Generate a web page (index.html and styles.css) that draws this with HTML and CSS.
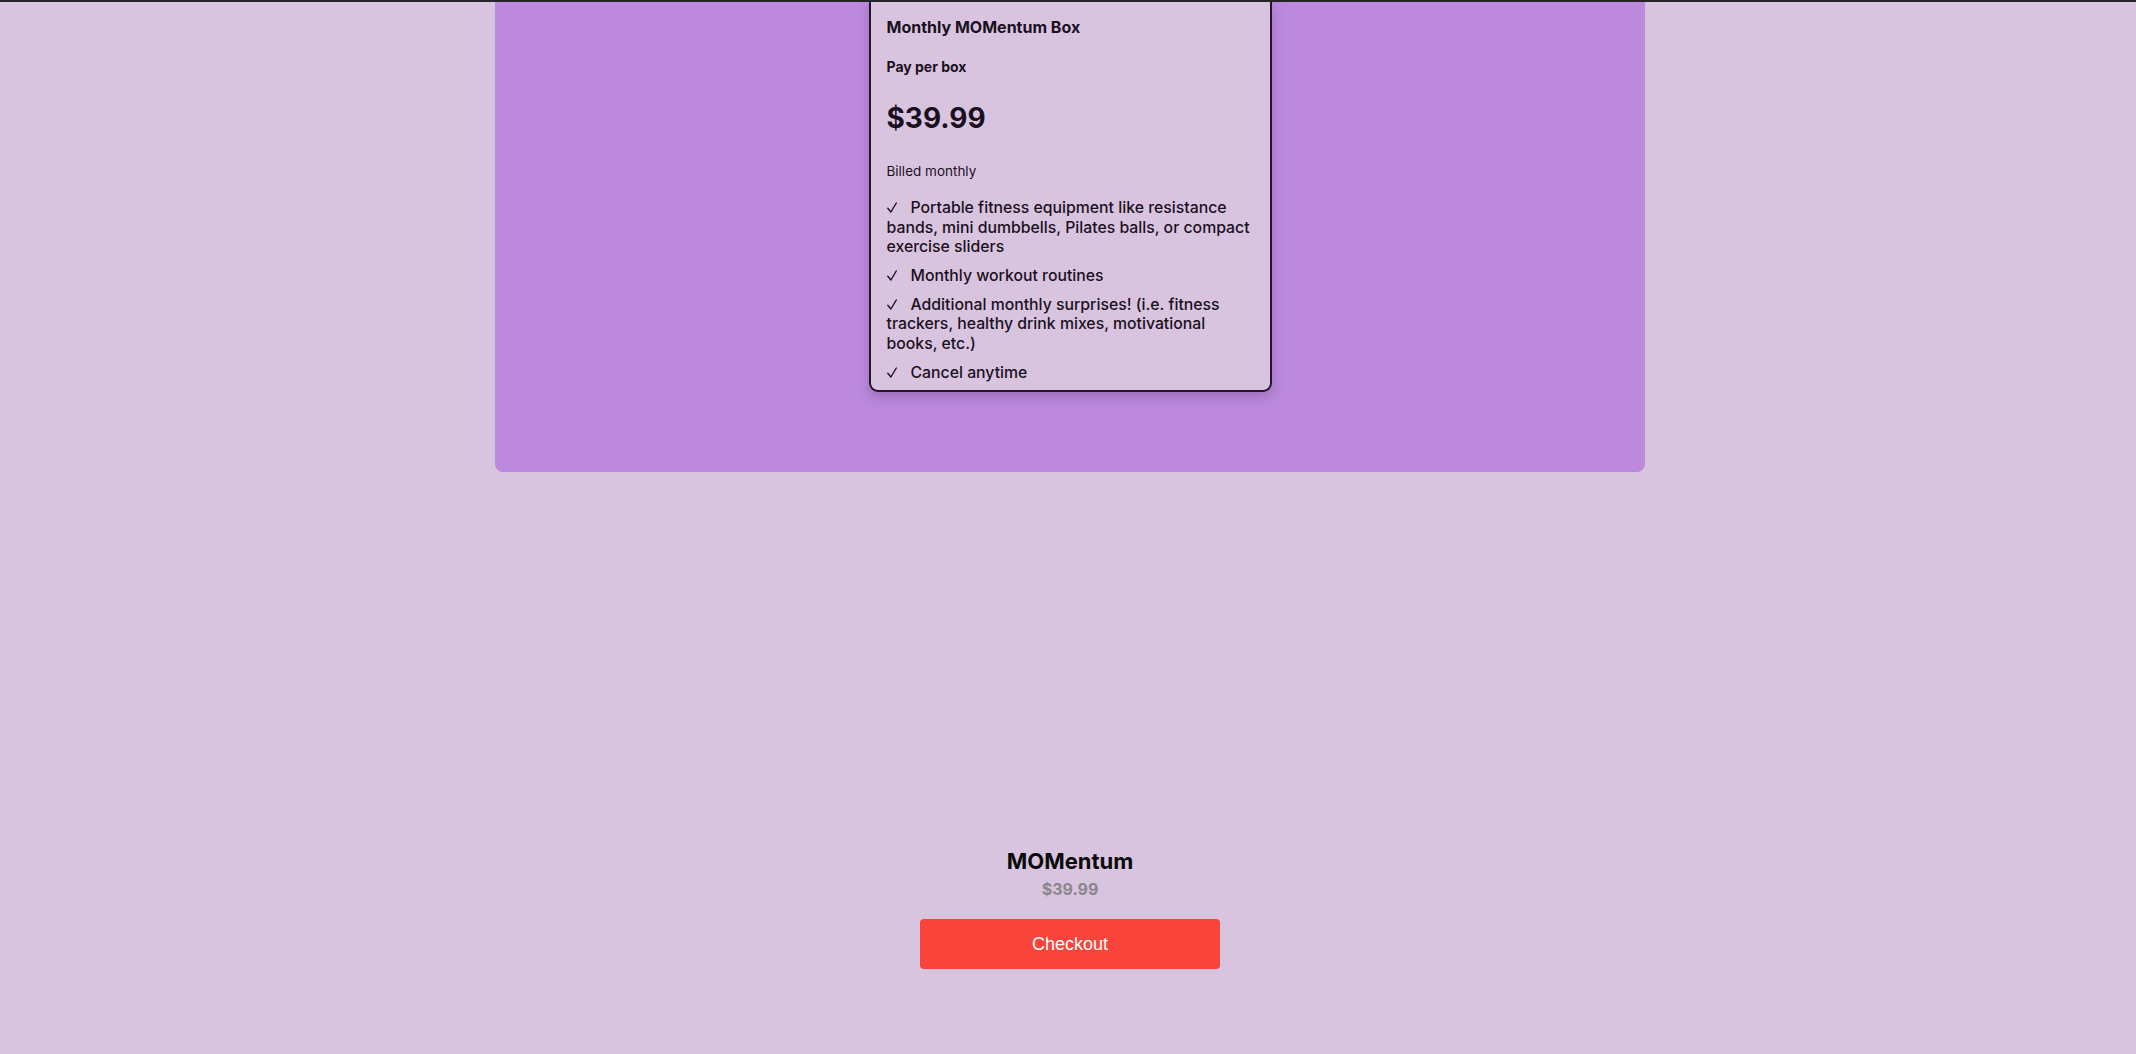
FILE: index.html
```html
<!DOCTYPE html>
<html lang="en">
<head>
<meta charset="utf-8">
<title>MOMentum</title>
<link rel="stylesheet" href="styles.css">
</head>
<body>
<div class="topline"></div>
<main class="page">
  <section class="panel">
    <div class="card">
      <h3 class="card-title">Monthly MOMentum Box</h3>
      <p class="card-sub">Pay per box</p>
      <p class="card-price">$39.99</p>
      <p class="card-billed">Billed monthly</p>
      <ul class="features">
        <li><svg class="check" viewBox="0 0 10 11" width="10" height="11"><path d="M0.8 6.3 L3.9 10 L9.3 1" fill="none" stroke="#1a1120" stroke-width="1.4" stroke-linecap="round" stroke-linejoin="round"/></svg>Portable fitness equipment like resistance<br>bands, mini dumbbells, Pilates balls, or compact<br>exercise sliders</li>
        <li><svg class="check" viewBox="0 0 10 11" width="10" height="11"><path d="M0.8 6.3 L3.9 10 L9.3 1" fill="none" stroke="#1a1120" stroke-width="1.4" stroke-linecap="round" stroke-linejoin="round"/></svg>Monthly workout routines</li>
        <li><svg class="check" viewBox="0 0 10 11" width="10" height="11"><path d="M0.8 6.3 L3.9 10 L9.3 1" fill="none" stroke="#1a1120" stroke-width="1.4" stroke-linecap="round" stroke-linejoin="round"/></svg>Additional monthly surprises! (i.e. fitness<br>trackers, healthy drink mixes, motivational<br>books, etc.)</li>
        <li><svg class="check" viewBox="0 0 10 11" width="10" height="11"><path d="M0.8 6.3 L3.9 10 L9.3 1" fill="none" stroke="#1a1120" stroke-width="1.4" stroke-linecap="round" stroke-linejoin="round"/></svg>Cancel anytime</li>
      </ul>
    </div>
  </section>
  <section class="checkout">
    <h2 class="product">MOMentum</h2>
    <p class="product-price">$39.99</p>
    <button class="checkout-btn" type="button">Checkout</button>
  </section>
</main>
</body>
</html>
```
FILE: styles.css
```css
html, body {
  margin: 0;
  padding: 0;
  background: #d9c4e0;
}
body {
  font-family: Inter, "Noto Sans", sans-serif;
  color: #1a1120;
  min-height: 1054px;
}
.topline {
  height: 2px;
  background: #27252a;
}
.page {
  display: flex;
  flex-direction: column;
  align-items: center;
  padding-left: 4px;
}
.panel {
  width: 1150px;
  background: #bc89dd;
  border-radius: 0 0 8px 8px;
  display: flex;
  justify-content: center;
  padding-bottom: 80px;
}
.card {
  width: 403px;
  box-sizing: border-box;
  border: 2px solid #24152b;
  border-top: none;
  border-radius: 0 0 9px 9px;
  background: #d9c4e0;
  padding: 16px 16px 8px;
  box-shadow: 0 5px 12px rgba(70, 30, 90, 0.25);
}
.card-title {
  margin: 0;
  font-size: 16px;
  font-weight: 700;
  line-height: 19.4px;
}
.card-sub {
  margin: 21px 0 0;
  font-size: 14px;
  font-weight: 700;
  line-height: 17px;
}
.card-price {
  margin: 26px 0 0;
  font-size: 28px;
  font-weight: 700;
  line-height: 34px;
}
.card-billed {
  margin: 28px 0 0;
  font-size: 13.5px;
  font-weight: 400;
  line-height: 17px;
}
.features {
  list-style: none;
  margin: 18px 0 0;
  padding: 0;
}
.features li {
  font-size: 15.8px;
  font-weight: 500;
  line-height: 19.2px;
  margin-bottom: 10px;
  white-space: nowrap;
}
.features li:last-child {
  margin-bottom: 0;
}
.check {
  display: inline-block;
  vertical-align: baseline;
  margin-right: 14px;
}
.checkout {
  display: flex;
  flex-direction: column;
  align-items: center;
  margin-top: 376px;
}
.product {
  margin: 0;
  font-size: 22px;
  font-weight: 700;
  line-height: 26.6px;
  color: #0b0b0b;
}
.product-price {
  margin: 5px 0 0;
  font-size: 16px;
  font-weight: 700;
  line-height: 19.4px;
  color: #8a868c;
}
.checkout-btn {
  margin-top: 20px;
  width: 300px;
  height: 50px;
  border: none;
  border-radius: 4px;
  background: #f8443a;
  color: #ffffff;
  font-family: "Liberation Sans", Arial, sans-serif;
  font-size: 18px;
  cursor: pointer;
}
```
